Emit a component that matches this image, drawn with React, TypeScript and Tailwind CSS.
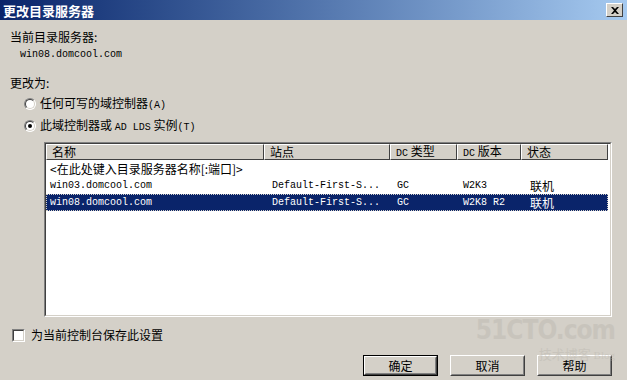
import React from 'react';

const cjk = { fontFamily: '"Noto Sans CJK SC", "Noto Sans", sans-serif' };
const mono = { fontFamily: '"Liberation Mono", "Noto Sans CJK SC", monospace' };

const columns = [
  { label: '名称', w: 'w-[218px]' },
  { label: '站点', w: 'w-[126px]' },
  { label: 'DC 类型', w: 'w-[67px]' },
  { label: 'DC 版本', w: 'w-[64px]' },
  { label: '状态', w: 'flex-1' },
];

const rows = [
  { name: 'win03.domcool.com', site: 'Default-First-S...', type: 'GC', ver: 'W2K3', state: '联机' },
  { name: 'win08.domcool.com', site: 'Default-First-S...', type: 'GC', ver: 'W2K8 R2', state: '联机', selected: true },
];

function Radio({ checked }: { checked?: boolean }) {
  return (
    <span className="relative flex h-[12px] w-[12px] items-center justify-center rounded-full border border-t-[#808080] border-l-[#808080] border-r-white border-b-white bg-white">
      <span className="absolute inset-0 rounded-full border border-t-[#404040] border-l-[#404040] border-r-[#d4d0c8] border-b-[#d4d0c8]" />
      {checked && <span className="h-[4px] w-[4px] rounded-full bg-black" />}
    </span>
  );
}

function Button({ label, isDefault }: { label: string; isDefault?: boolean }) {
  return (
    <div className={`h-[21px] w-[75px] ${isDefault ? 'border border-black' : ''}`}>
      <div className="h-full w-full border border-t-white border-l-white border-r-[#404040] border-b-[#404040]">
        <div className="flex h-full w-full items-center justify-center border border-t-[#d4d0c8] border-l-[#d4d0c8] border-r-[#808080] border-b-[#808080] text-[12px] text-black" style={cjk}>
          {label}
        </div>
      </div>
    </div>
  );
}

export default function App() {
  return (
    <div className="relative h-[380px] w-[627px] overflow-hidden bg-[#d4d0c8] text-[12px] leading-none text-black" style={cjk}>
      {/* title bar */}
      <div className="flex h-[20px] items-center justify-between bg-gradient-to-r from-[#0a246a] to-[#a6caf0] pl-[3px] pr-[4px]">
        <span className="text-[13px] font-bold text-white">更改目录服务器</span>
        <div className="flex h-[14px] w-[17px] items-center justify-center border border-t-white border-l-white border-r-[#404040] border-b-[#404040] bg-[#d4d0c8]">
          <svg width="8" height="7" viewBox="0 0 8 7">
            <path d="M0 0 L2 0 L4 2 L6 0 L8 0 L5 3.5 L8 7 L6 7 L4 5 L2 7 L0 7 L3 3.5 Z" fill="black" />
          </svg>
        </div>
      </div>

      <div className="flex flex-col px-[10px]">
        <div className="mt-[11px] h-[12px]">当前目录服务器:</div>
        <div className="mt-[6px] pl-[10px] text-[10px] leading-[12px]" style={mono}>win08.domcool.com</div>
        <div className="mt-[16px] h-[12px]">更改为:</div>

        <div className="mt-[9px] flex flex-col gap-[10px] pl-[14px]">
          <div className="flex h-[12px] items-center gap-[4px]">
            <Radio />
            <span>任何可写的域控制器<span className="text-[10px]" style={mono}>(A)</span></span>
          </div>
          <div className="flex h-[12px] items-center gap-[4px]">
            <Radio checked />
            <span>此域控制器或 <span className="text-[10px]" style={mono}>AD LDS</span> 实例<span className="text-[10px]" style={mono}>(T)</span></span>
          </div>
        </div>

        {/* list view */}
        <div className="ml-[34px] mt-[10px] h-[175px] w-[568px] border border-t-[#808080] border-l-[#808080] border-r-white border-b-white">
          <div className="flex h-full w-full flex-col border border-t-[#404040] border-l-[#404040] border-r-[#d4d0c8] border-b-[#d4d0c8] bg-white">
            <div className="flex h-[16px] pr-[2px]">
              {columns.map((c) => (
                <div key={c.label} className={`${c.w} flex h-full items-center border border-t-white border-l-white border-r-[#404040] border-b-[#404040] bg-[#d4d0c8] pl-[5px]`}>
                  {c.label.startsWith('DC') ? (
                    <span><span className="text-[10px]" style={mono}>DC</span> {c.label.slice(3)}</span>
                  ) : (
                    c.label
                  )}
                </div>
              ))}
            </div>
            <div className="flex h-[17px] items-center pl-[4px]">&lt;在此处键入目录服务器名称[:端口]&gt;</div>
            {rows.map((r) => (
              <div
                key={r.name}
                className={`mr-[2px] flex h-[17px] items-center ${r.selected ? 'border border-dotted border-[#d4d0c8] bg-[#0a246a] text-white' : 'border border-transparent'}`}
              >
                <div className="w-[218px] pl-[3px] text-[10px]" style={mono}>{r.name}</div>
                <div className="w-[126px] pl-[7px] text-[10px]" style={mono}>{r.site}</div>
                <div className="w-[67px] pl-[6px] text-[10px]" style={mono}>{r.type}</div>
                <div className="w-[64px] pl-[5px] text-[10px]" style={mono}>{r.ver}</div>
                <div className="flex-1 pl-[8px]">{r.state}</div>
              </div>
            ))}
          </div>
        </div>

        <div className="mt-[11px] flex h-[14px] items-center gap-[6px] pl-[2px]">
          <span className="h-[13px] w-[13px] border border-t-[#808080] border-l-[#808080] border-r-white border-b-white">
            <span className="block h-full w-full border border-t-[#404040] border-l-[#404040] border-r-[#d4d0c8] border-b-[#d4d0c8] bg-white" />
          </span>
          <span>为当前控制台保存此设置</span>
        </div>

        <div className="mt-[13px] flex justify-end gap-[12px] pr-[5px]">
          <Button label="确定" isDefault />
          <Button label="取消" />
          <Button label="帮助" />
        </div>
      </div>

      {/* watermark */}
      <div className="pointer-events-none absolute right-[12px] top-[317px] flex flex-col items-end whitespace-nowrap opacity-40">
        <span className="text-[26px] font-bold leading-none tracking-[-1px] text-[#b8b4ac]" style={{ fontFamily: '"DejaVu Sans Condensed", sans-serif' }}>51CTO.com</span>
        <span className="mt-[4px] text-[13px] leading-none text-[#b8b4ac]">技术博客 <span className="text-[11px]" style={{ fontFamily: '"Liberation Serif", serif' }}>Blog</span></span>
      </div>
    </div>
  );
}
